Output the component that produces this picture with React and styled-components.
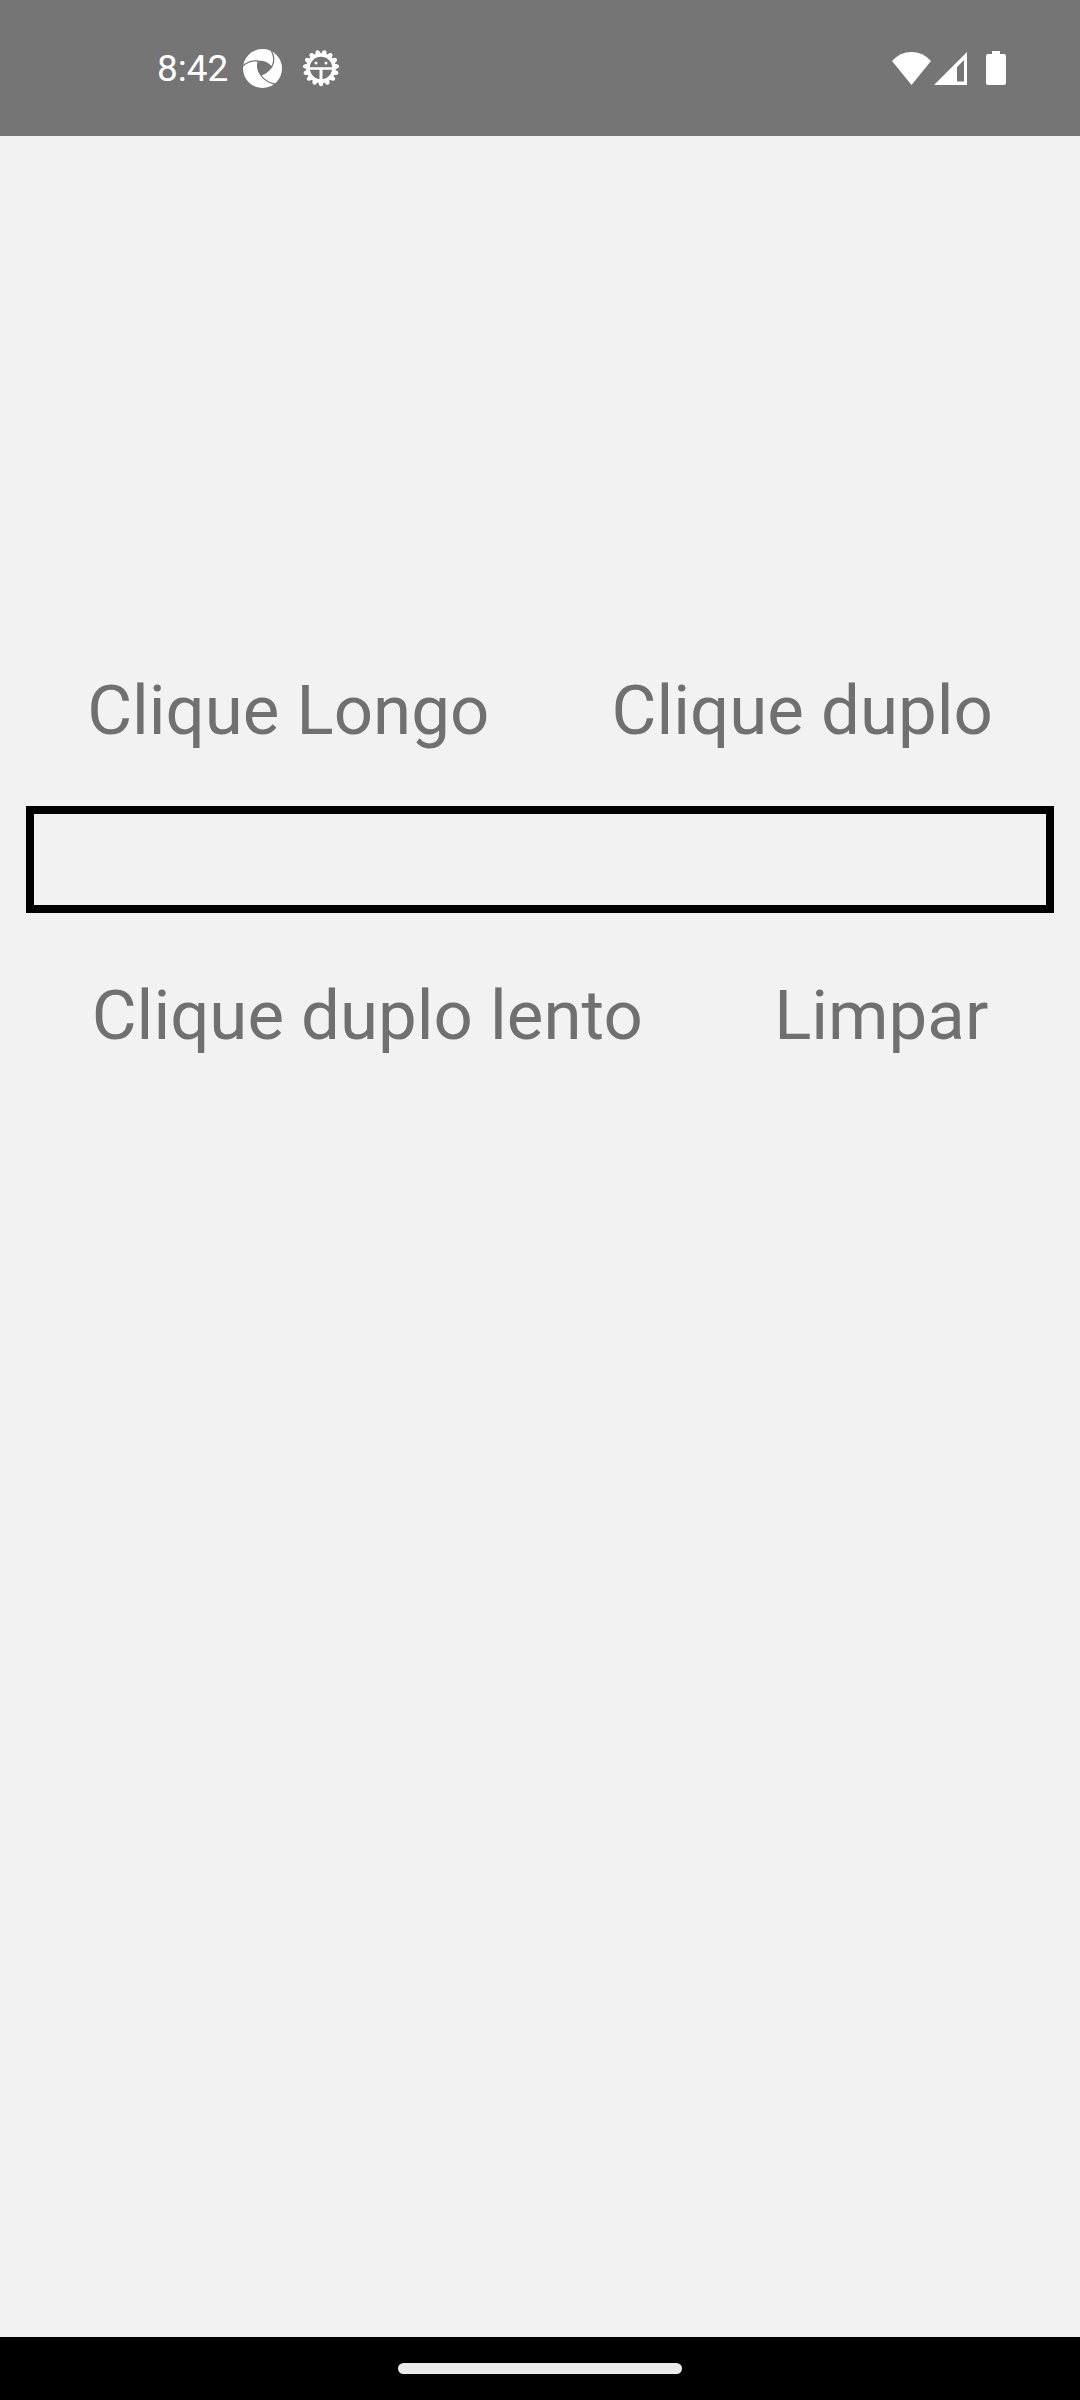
import React, { useState } from "react";
import styled, { createGlobalStyle } from "styled-components";

const GlobalStyle = createGlobalStyle`
  *, *::before, *::after { box-sizing: border-box; }
  body {
    margin: 0;
    background: #f2f2f2;
    font-family: Roboto, "Noto Sans", sans-serif;
  }
`;

const Screen = styled.div`
  display: flex;
  flex-direction: column;
  min-height: 100vh;
`;

const StatusBar = styled.header`
  display: flex;
  align-items: center;
  justify-content: space-between;
  height: 136px;
  padding: 0 74px 0 157px;
  background: #757575;
  color: #fff;
`;

const StatusGroup = styled.div`
  display: flex;
  align-items: center;
  gap: ${({ $gap }) => $gap}px;
`;

const Clock = styled.time`
  padding-top: 2px;
  font-size: 37px;
  line-height: 44px;
`;

const Icon = styled.svg`
  display: block;
  width: ${({ $w }) => $w}px;
  height: ${({ $h }) => $h}px;
  fill: #fff;
`;

const Main = styled.main`
  flex: 1;
  padding: 534px 26px 0;
`;

const ButtonRow = styled.div`
  display: flex;
  justify-content: space-around;
`;

const TextButton = styled.button`
  padding: 0;
  border: 0;
  background: none;
  color: #707070;
  font-family: inherit;
  font-size: 69px;
  line-height: 81px;
  white-space: nowrap;
`;

const ResultField = styled.input`
  display: block;
  width: 100%;
  height: 107px;
  margin: 55px 0 62px;
  padding: 0 16px;
  border: 8px solid #000;
  border-radius: 0;
  outline: none;
  background: transparent;
  color: #707070;
  font-family: inherit;
  font-size: 69px;
`;

const NavBar = styled.footer`
  display: flex;
  justify-content: center;
  height: 63px;
  padding-top: 26px;
  background: #000;
`;

const HomeHandle = styled.div`
  width: 284px;
  height: 11px;
  border-radius: 6px;
  background: #ebebeb;
`;

const teeth = Array.from({ length: 15 }, (_, i) => i * 24);

function ApertureIcon() {
  return (
    <Icon $w={39} $h={39} viewBox="0 0 39 39" aria-hidden="true">
      <circle cx="19.5" cy="19.5" r="19.5" />
      <path d="M15.3 12Q23 12 28.7 18Q24 24 17.7 26Q13 19 15.3 12Z" fill="#757575" />
      <g fill="none" stroke="#757575" strokeWidth="1.3">
        <path d="M0 17Q6 11 15.3 12Q23 12 28.7 18" />
        <path d="M28.5 2Q33 10 28.7 18Q24 24 17.7 26" />
        <path d="M15.3 12Q13 19 17.7 26Q23 34 34 35.5" />
      </g>
    </Icon>
  );
}

function GearIcon() {
  return (
    <Icon $w={38} $h={38} viewBox="0 0 38 38" aria-hidden="true">
      {teeth.map((a) => (
        <path
          key={a}
          d="M16.2 33L17.2 36.2Q19 38.2 20.8 36.2L21.8 33Z"
          transform={`rotate(${a} 19 19)`}
        />
      ))}
      <circle cx="19" cy="19" r="13" fill="none" stroke="#fff" strokeWidth="3.6" />
      <path d="M7 18.3H31V20.8H20.5V32H17.5V20.8H7Z" />
      <circle cx="14" cy="14" r="1.5" />
      <circle cx="24" cy="14" r="1.5" />
    </Icon>
  );
}

function WifiIcon() {
  return (
    <Icon $w={39} $h={33} viewBox="0 0 39 33" aria-hidden="true">
      <path d="M0 9Q8 0 19.5 0T39 9L19.5 33Z" />
    </Icon>
  );
}

function SignalIcon() {
  return (
    <Icon $w={33} $h={33} viewBox="0 0 33 33" aria-hidden="true">
      <path fillRule="evenodd" d="M0 33L33 0V33ZM23 15V29.5H30V8Z" />
    </Icon>
  );
}

function BatteryIcon() {
  return (
    <Icon $w={20} $h={34} viewBox="0 0 20 34" aria-hidden="true">
      <path d="M6 0H14V3H18Q20 3 20 5V32Q20 34 18 34H2Q0 34 0 32V5Q0 3 2 3H6Z" />
    </Icon>
  );
}

export default function App() {
  const [result, setResult] = useState("");

  return (
    <>
      <GlobalStyle />
      <Screen>
        <StatusBar>
          <StatusGroup $gap={15}>
            <Clock>8:42</Clock>
            <StatusGroup $gap={20}>
              <ApertureIcon />
              <GearIcon />
            </StatusGroup>
          </StatusGroup>
          <StatusGroup $gap={19}>
            <StatusGroup $gap={3}>
              <WifiIcon />
              <SignalIcon />
            </StatusGroup>
            <BatteryIcon />
          </StatusGroup>
        </StatusBar>
        <Main>
          <ButtonRow>
            <TextButton type="button">Clique Longo</TextButton>
            <TextButton type="button" onDoubleClick={() => setResult("Clique duplo")}>
              Clique duplo
            </TextButton>
          </ButtonRow>
          <ResultField
            type="text"
            aria-label="Resultado"
            value={result}
            onChange={(event) => setResult(event.target.value)}
          />
          <ButtonRow>
            <TextButton type="button">Clique duplo lento</TextButton>
            <TextButton type="button" onClick={() => setResult("")}>
              Limpar
            </TextButton>
          </ButtonRow>
        </Main>
        <NavBar>
          <HomeHandle />
        </NavBar>
      </Screen>
    </>
  );
}
